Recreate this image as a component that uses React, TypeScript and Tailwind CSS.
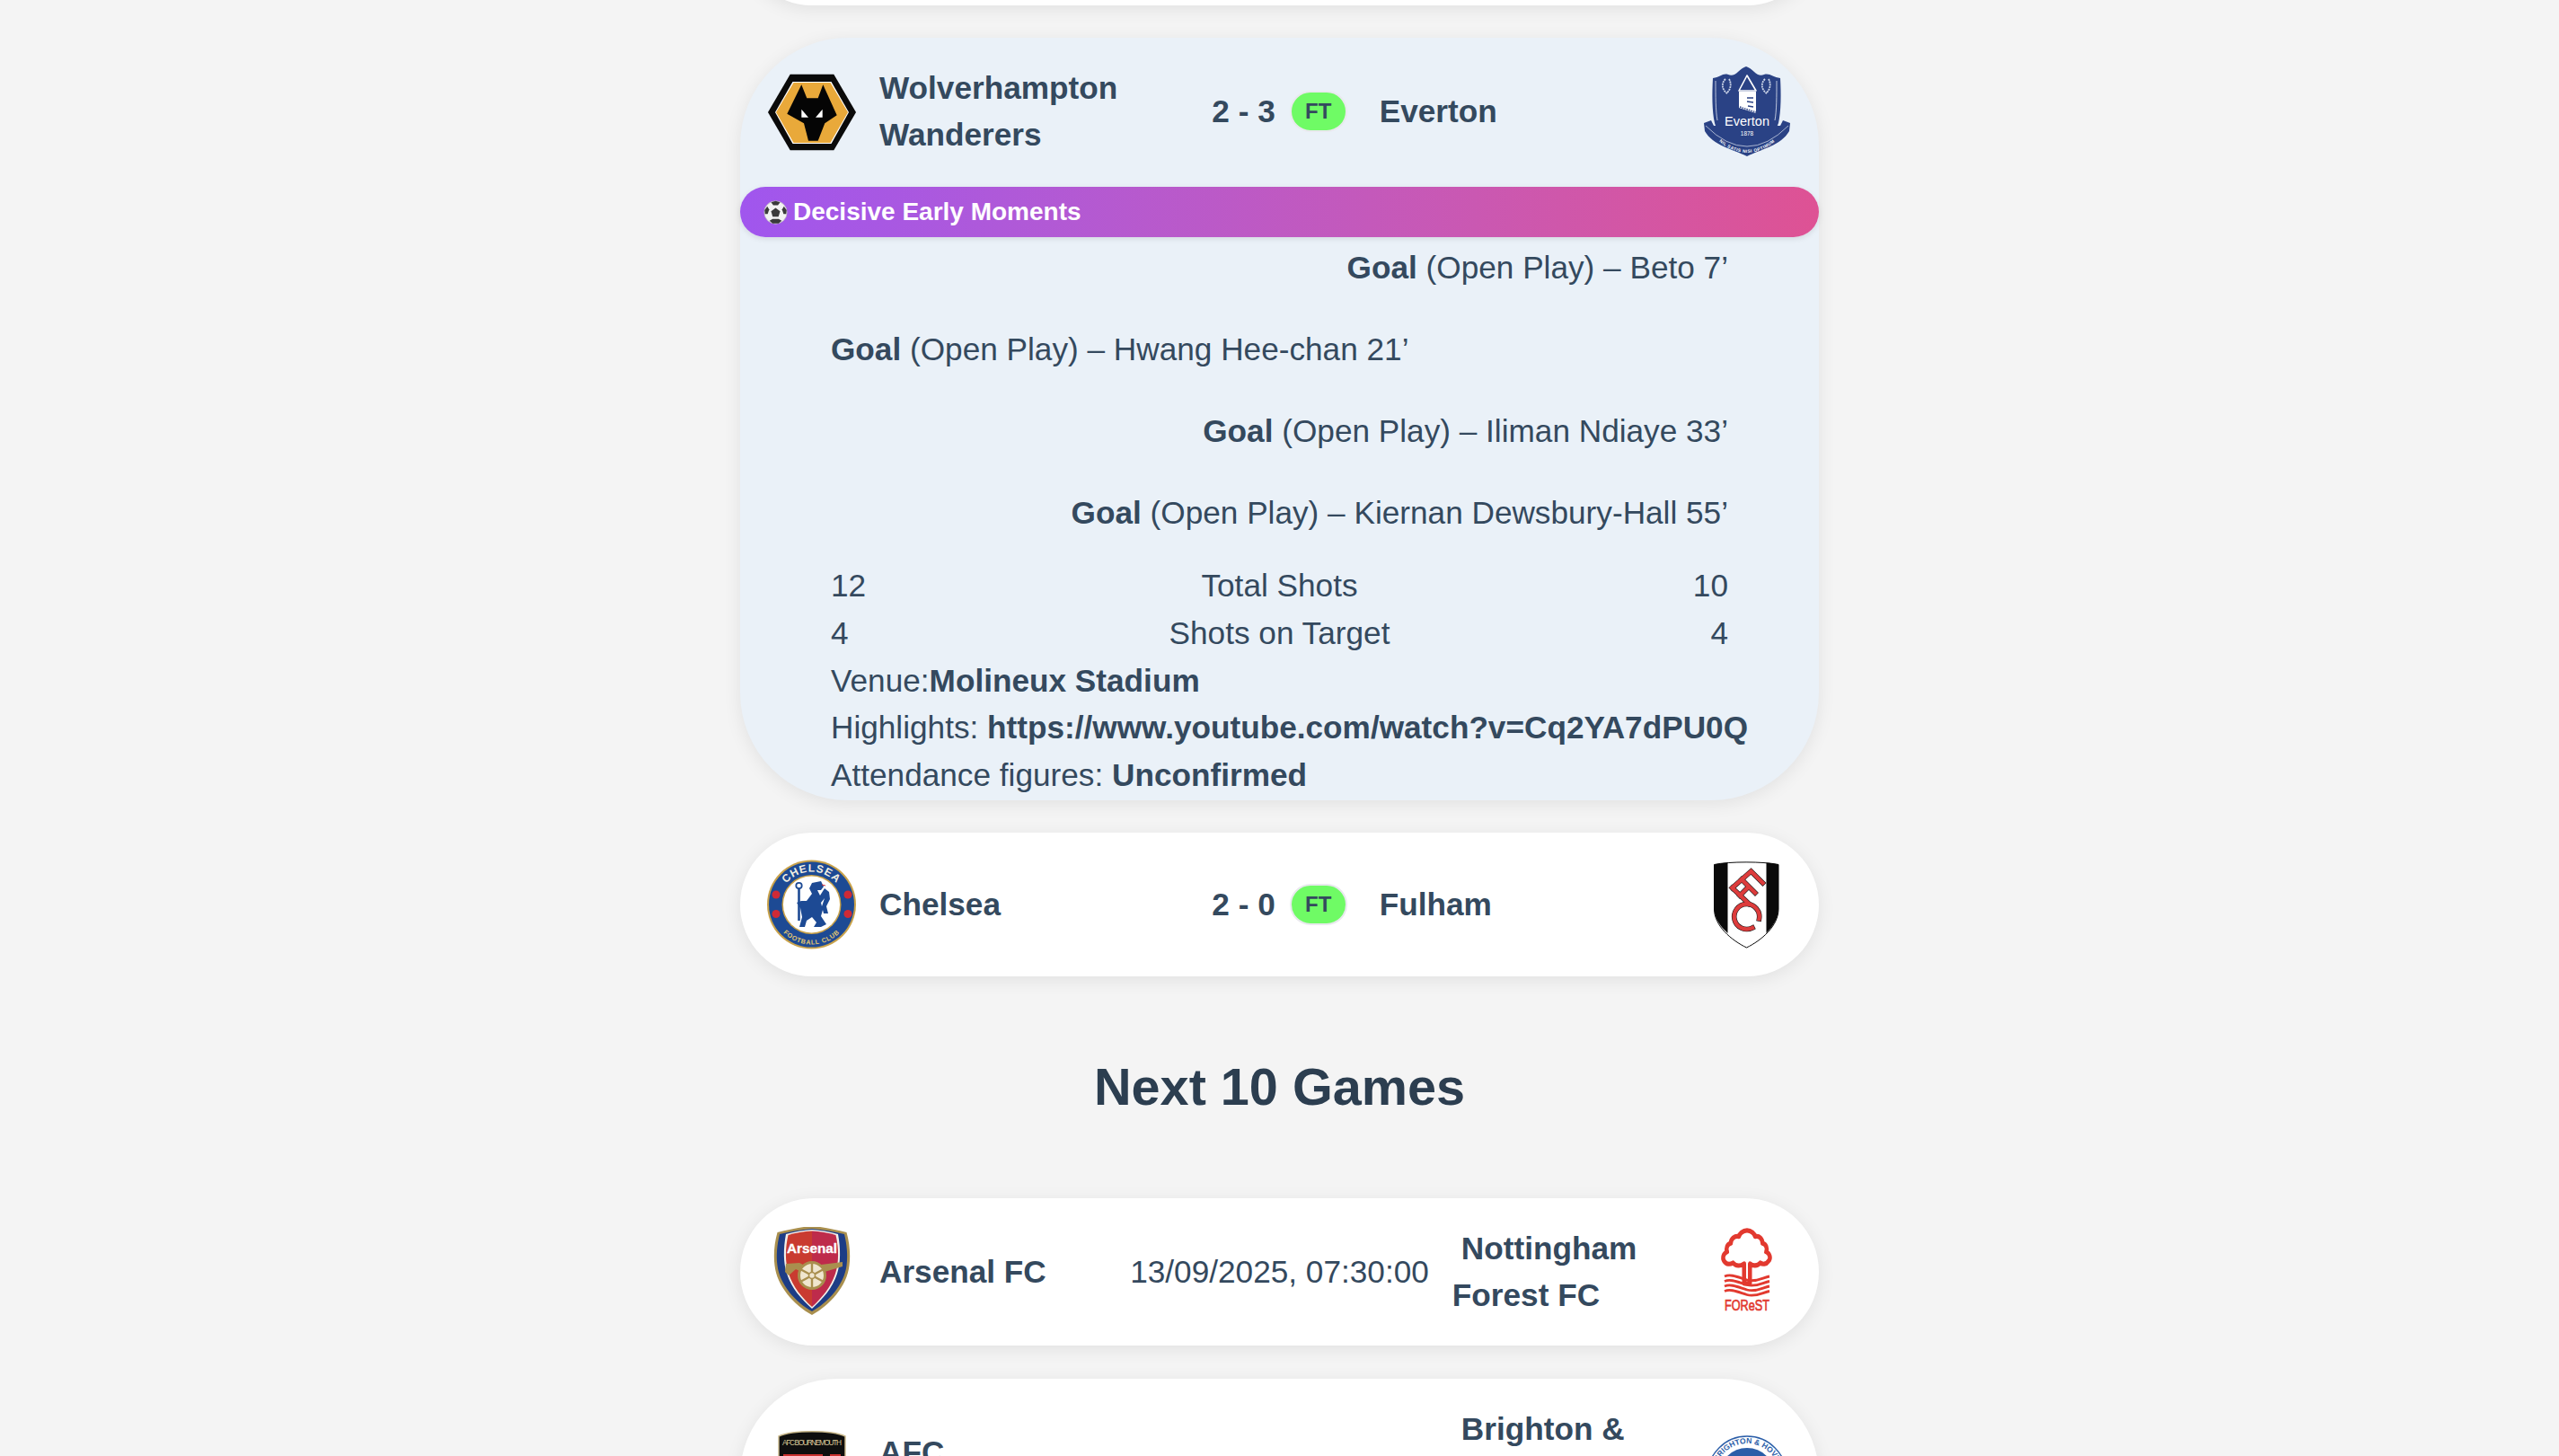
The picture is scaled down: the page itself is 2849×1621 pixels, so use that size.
import type { ReactNode } from 'react'

function Wolves() {
  return (
    <svg viewBox="0 0 100 100" className="w-[100px] h-[100px] shrink-0">
      <polygon points="25.7,8.7 74.3,8.7 99,51 74.3,93.3 25.7,93.3 1,51" fill="#0a0a0a" />
      <polygon points="28.5,17 71.5,17 91,51 71.5,86 28.5,86 9,51" fill="#ffffff" />
      <polygon points="29.5,18 70.5,18 90,51 70.5,85 29.5,85 10,51" fill="#e9a93a" />
      <polygon points="38.3,20.3 44.3,35.3 56.7,35.3 62.3,20.3 77.7,54.3 64.3,63.3 56.7,82.7 46,82.7 41,63.3 22.3,52.7" fill="#050505" />
      <polygon points="38.3,47.7 38.3,56.7 46,56.7" fill="#ffffff" />
      <polygon points="61.7,47.7 61.7,56.7 54,56.7" fill="#ffffff" />
    </svg>
  )
}

function Everton() {
  return (
    <svg viewBox="0 0 100 100" className="w-[100px] h-[100px] shrink-0">
      <path d="M2 63 L10 60 L13 66 L87 66 L90 60 L98 63 L97 72 C88 88 66 92 50 100 C34 92 12 88 3 72 Z" fill="#2a4285" />
      <path d="M12 13 C20 12 23 7 29 9 C33 11 37 9 40 6 C43 3 46 1 49 0 C52 1 55 3 58 6 C61 9 65 11 69 9 C75 7 79 12 87 13 C88 30 88 50 85 63 C80 78 64 86 49 92 C34 86 18 78 14 63 C11 50 11 30 12 13 Z" fill="#2a4285" />
      <path d="M15 16 C15 32 15 50 17 60" fill="none" stroke="#dfe5f1" strokeWidth="0.8" />
      <path d="M83 16 C83 32 83 50 81 60" fill="none" stroke="#dfe5f1" strokeWidth="0.8" />
      <path d="M4 66 Q50 112 96 66" fill="none" stroke="#dfe5f1" strokeWidth="0.7" />
      <path d="M50 10 L41 27 L60 27 Z" fill="#2a4285" stroke="#ffffff" strokeWidth="1.6" strokeLinejoin="round" />
      <path d="M41 28 L60 28 L60 52 L41 46 Z" fill="#ffffff" />
      <path d="M42 45 L60 51" stroke="#2a4285" strokeWidth="1.4" strokeDasharray="1.6 1" />
      <path d="M50 35 L57 35 M50 39 L57 40 M51 44 L57 45" stroke="#2a4285" strokeWidth="1.3" />
      <path d="M26 14 C21 19 22 26 28 30 M30 14 C33 19 32 26 27 30" fill="none" stroke="#cdd6e8" strokeWidth="1.8" strokeDasharray="2 0.8" />
      <path d="M70 14 C65 19 66 26 72 30 M74 14 C77 19 76 26 71 30" fill="none" stroke="#cdd6e8" strokeWidth="1.8" strokeDasharray="2 0.8" />
      <text x="50" y="66" textAnchor="middle" fontSize="14.5" fill="#ffffff" textLength="50" lengthAdjust="spacingAndGlyphs" fontFamily="'Liberation Sans', sans-serif">Everton</text>
      <text x="50" y="77" textAnchor="middle" fontSize="6.5" fill="#ffffff" fontFamily="'Liberation Sans', sans-serif">1878</text>
      <path id="everton-motto" d="M7 72 Q50 120 93 72" fill="none" />
      <text fontSize="4.8" fill="#ffffff" fontWeight="700" letterSpacing="0.5" fontFamily="'Liberation Sans', sans-serif">
        <textPath href="#everton-motto" startOffset="50%" textAnchor="middle">NIL SATIS NISI OPTIMUM</textPath>
      </text>
    </svg>
  )
}

function Chelsea() {
  return (
    <svg viewBox="0 0 100 100" className="w-[100px] h-[100px] shrink-0">
      <circle cx="49.5" cy="50" r="49.5" fill="#c9a24a" />
      <circle cx="49.5" cy="50" r="47.5" fill="#1d4a94" />
      <circle cx="49.5" cy="50" r="33" fill="#c9a24a" />
      <circle cx="49.5" cy="50" r="31.5" fill="#ffffff" />
      <path id="chelsea-top" d="M13 50 A36.5 36.5 0 0 1 86 50" fill="none" />
      <path id="chelsea-bottom" d="M5 50 A44.5 44.5 0 0 0 94 50" fill="none" />
      <text fontSize="12" fontWeight="700" fill="#f3efe2" letterSpacing="1" fontFamily="'Liberation Sans', sans-serif">
        <textPath href="#chelsea-top" startOffset="50%" textAnchor="middle">CHELSEA</textPath>
      </text>
      <text fontSize="7.2" fontWeight="700" fill="#e4c770" letterSpacing="0.7" fontFamily="'Liberation Sans', sans-serif">
        <textPath href="#chelsea-bottom" startOffset="50%" textAnchor="middle">FOOTBALL CLUB</textPath>
      </text>
      <g fill="#cf2a36">
        <circle cx="10" cy="39" r="4.5" />
        <circle cx="10" cy="60.5" r="4.5" />
        <circle cx="90" cy="39" r="4.5" />
        <circle cx="90" cy="60.5" r="4.5" />
      </g>
      <circle cx="35.5" cy="29" r="3.2" fill="none" stroke="#1d4a94" strokeWidth="1.8" />
      <path d="M35.5 32 L35.5 68" stroke="#1d4a94" strokeWidth="2.6" />
      <path d="M50 26 L60 24 L63 30 L60 34 L56 34 L59 40 L64 32 L69 36 L70 44 L66 52 L68 60 L63 60 L61 52 L64 43 L60 48 L62 56 L60 63 L66 72 L60 75 L52 75 L55 70 L50 64 L44 68 L42 75 L36 75 L39 64 L37 54 L33 48 L38 46 L44 46 L50 38 L47 32 Z" fill="#1d4a94" />
      <path d="M61 28 L65 29" stroke="#cf2a36" strokeWidth="1" />
    </svg>
  )
}

function Fulham() {
  return (
    <svg viewBox="0 0 100 100" className="w-[100px] h-[100px] shrink-0">
      <path d="M13.5 5.5 C30 2 68 2 85 5.5 L85 55 C85 74 66 90 49.5 98 C33 90 13.5 74 13.5 55 Z" fill="#ffffff" stroke="#0a0a0a" strokeWidth="1" />
      <path d="M13.5 5.5 C18 4.5 23 4 28.5 3.6 L28.5 82 C20 74 13.5 65 13.5 55 Z" fill="#0a0a0a" />
      <path d="M85 5.5 C80 4.5 76 4 71.5 3.6 L71.5 82 C79 74 85 65 85 55 Z" fill="#0a0a0a" />
      <g fill="none" strokeLinecap="square">
        <g stroke="#1a1a1a" strokeWidth="5.6">
          <path d="M33.5 31.5 L54.5 13 L67.5 26 M44 22 L59 37 M33.5 31.5 L52 49 M42 40 L49 33" />
          <path d="M63.5 66 A14 14 0 1 0 56 76" />
        </g>
        <g stroke="#dd3c3c" strokeWidth="4.4">
          <path d="M33.5 31.5 L54.5 13 L67.5 26 M44 22 L59 37 M33.5 31.5 L52 49 M42 40 L49 33" />
          <path d="M63.5 66 A14 14 0 1 0 56 76" />
        </g>
      </g>
    </svg>
  )
}

function Arsenal() {
  return (
    <svg viewBox="0 0 100 100" className="w-[100px] h-[100px] shrink-0">
      <path d="M11.5 6 C24 3 37 0 50 -1 C63 0 76 3 88.5 6 C92 18 93 32 91.5 43 C89 66 70 87 50 98 C30 87 11 66 8.5 43 C7 32 8 18 11.5 6 Z" fill="#a98f4e" />
      <path d="M14 8 C26 5 38 3 50 2 C62 3 74 5 86 8 C89 20 90 32 88.5 43 C86 64 68 84 50 94 C32 84 14 64 11.5 43 C10 32 11 20 14 8 Z" fill="#1d3d86" />
      <path d="M21 8 C30 5.5 40 3.5 50 3 C60 3.5 70 5.5 79 8 C82 24 82 40 78 52 C73 68 62 80 50 91 C38 80 27 68 22 52 C18 40 18 24 21 8 Z" fill="#f4f1ea" />
      <path d="M23.5 9 C32 6.5 41 5 50 4.5 L50 89 C39 79 29 67 24 52 C20 40 20 24 23.5 9 Z" fill="#c93b30" />
      <path d="M76.5 9 C68 6.5 59 5 50 4.5 L50 89 C61 79 71 67 76 52 C80 40 80 24 76.5 9 Z" fill="#be2b4b" />
      <text x="50" y="28.5" textAnchor="middle" fontSize="14.5" fontWeight="700" fill="#ffffff" stroke="#ffffff" strokeWidth="0.3" textLength="56" lengthAdjust="spacingAndGlyphs" fontFamily="'Liberation Sans', sans-serif">Arsenal</text>
      <path d="M21 41 L36 40 L44 44 L84 39 L84 44 L64 50 L40 51 L32 47 L24 54 L20 50 Z" fill="#a98f4e" />
      <circle cx="50" cy="54" r="14.5" fill="#f0e6cf" stroke="#a98f4e" strokeWidth="3" />
      <path d="M50 40 L50 68 M37 47 L63 61 M37 61 L63 47" stroke="#a98f4e" strokeWidth="2.4" />
      <circle cx="50" cy="54" r="3.5" fill="#f0e6cf" stroke="#a98f4e" strokeWidth="1.6" />
    </svg>
  )
}

function Forest() {
  return (
    <svg viewBox="0 0 100 100" className="w-[100px] h-[100px] shrink-0">
      <g transform="translate(9 2) scale(0.82 0.95)">
        <path d="M50 2 C56 2 60 6 61 9 C67 8 71 12 71 17 C76 18 78 23 76 27 C81 29 83 35 79 38 C76 42 71 42 68 40 C64 44 58 44 54 41 L54 64 L46 64 L46 41 C41 44 35 44 31 40 C27 42 22 42 19 38 C16 34 18 29 23 27 C21 23 23 18 28 17 C28 12 33 8 39 9 C40 6 44 2 50 2 Z" fill="none" stroke="#e2392f" strokeWidth="5.5" strokeLinejoin="round" />
      </g>
      <g fill="none" stroke="#e2392f" strokeWidth="2.8">
        <path d="M25 55 C32 52 40 56 50 59 C60 62 68 56 75 55" />
        <path d="M25 60.5 C32 57.5 40 61.5 50 64.5 C60 67.5 68 61.5 75 60.5" />
        <path d="M25 66 C32 63 40 67 50 70 C60 73 68 67 75 66" />
        <path d="M25 71.5 C32 68.5 40 72.5 50 75.5 C60 78.5 68 72.5 75 71.5" />
      </g>
      <text x="50" y="93" textAnchor="middle" fontSize="17" fill="#e2392f" textLength="50" lengthAdjust="spacingAndGlyphs" stroke="#e2392f" strokeWidth="0.7" fontFamily="'Liberation Sans', sans-serif">FOReST</text>
    </svg>
  )
}

function Bournemouth() {
  return (
    <svg viewBox="0 0 100 100" className="w-[100px] h-[100px] shrink-0">
      <path d="M13 6 C28 -1 72 -1 87 6 L87 75 C87 88 65 95 50 100 C35 95 13 88 13 75 Z" fill="#0e0e0e" stroke="#c8b78a" strokeWidth="1.4" />
      <text x="50" y="16" textAnchor="middle" fontSize="8.4" fill="#d9c998" textLength="66" fontFamily="'Liberation Sans', sans-serif">AFC BOURNEMOUTH</text>
      <path d="M18 26 L82 26 L82 72 C82 84 62 90 50 94 C38 90 18 84 18 72 Z" fill="#c8312f" />
      <path d="M62 26 L70 26 L70 88 L62 90 Z" fill="#0e0e0e" />
      <path d="M46 34 C38 30 33 42 38 50 L46 64 L56 64 L54 40 Z" fill="#ffffff" />
      <circle cx="45" cy="40" r="4" fill="#0e0e0e" />
    </svg>
  )
}

function Brighton() {
  return (
    <svg viewBox="0 0 100 100" className="w-[100px] h-[100px] shrink-0">
      <circle cx="50" cy="50" r="44" fill="#ffffff" stroke="#2b5ea8" strokeWidth="1.4" />
      <circle cx="50" cy="50" r="31" fill="#2b5ea8" />
      <path id="brighton-top" d="M14 50 A36 36 0 0 1 86 50" fill="none" />
      <text fontSize="8.6" fill="#2b5ea8" fontWeight="700" fontFamily="'Liberation Sans', sans-serif">
        <textPath href="#brighton-top" startOffset="50%" textAnchor="middle">BRIGHTON & HOVE</textPath>
      </text>
    </svg>
  )
}

function SoccerBall() {
  return (
    <svg viewBox="0 0 32 32" className="w-[27px] h-[27px] shrink-0">
      <circle cx="16" cy="16" r="15" fill="#f2f2f2" stroke="#b8b8b8" strokeWidth="0.8" />
      <polygon points="16,10 22,14.5 19.8,21.5 12.2,21.5 10,14.5" fill="#3a3a3a" />
      <path d="M10 2.6 L16 1 L22 2.6 L19 6.5 L13 6.5 Z" fill="#3a3a3a" />
      <path d="M1.5 13 L5 8 L7.5 12 L5.5 18 L2 18 Z" fill="#3a3a3a" />
      <path d="M30.5 13 L27 8 L24.5 12 L26.5 18 L30 18 Z" fill="#3a3a3a" />
      <path d="M8 27 L12 24.5 L20 24.5 L24 27 L20 30.5 L12 30.5 Z" fill="#3a3a3a" />
    </svg>
  )
}

type MatchProps = {
  homeLogo: ReactNode
  home: string
  center: ReactNode
  away: ReactNode
  awayLogo: ReactNode
}

function MatchRow({ homeLogo, home, center, away, awayLogo }: MatchProps) {
  return (
    <div className="flex items-center gap-[26px] p-[30px] leading-[52.15px]">
      <div className="flex flex-1 basis-0 items-center gap-[25px]">
        {homeLogo}
        <span className="font-bold">{home}</span>
      </div>
      {center}
      <div className="flex flex-1 basis-0 items-center gap-[25px]">
        <span className="flex-1 font-bold indent-[10px]">{away}</span>
        {awayLogo}
      </div>
    </div>
  )
}

function Score({ value }: { value: string }) {
  return (
    <div className="flex items-center gap-[16px]">
      <span className="font-bold whitespace-nowrap">{value}</span>
      <span className="flex h-[46px] w-[64px] items-center justify-center rounded-[23px] border-2 border-[#e9e9ee] bg-[#6ffb65] text-[24px] leading-none font-bold">
        FT
      </span>
    </div>
  )
}

const cardClass = 'rounded-[120px] bg-white shadow-[0_4px_20px_rgba(0,0,0,0.08)]'

function Goal({ who, side }: { who: string; side: 'left' | 'right' }) {
  return (
    <p className={side === 'right' ? 'text-right mb-[38px]' : 'text-left mb-[38px]'}>
      <strong>Goal</strong> (Open Play) – {who}
    </p>
  )
}

export default function App() {
  return (
    <div className="h-[1621px] overflow-hidden bg-[#f4f4f4] font-['Liberation_Sans',Arial,sans-serif] text-[35.2px] leading-[52.8px] text-[#34495e]">
      <div className="mx-auto flex w-[1201px] flex-col gap-[36.5px]">
        <div className={`${cardClass} -mt-[154.5px] h-[160px]`} />

        <div className="rounded-[120px] bg-[#eaf1f8] shadow-[0_4px_20px_rgba(0,0,0,0.08)]">
          <MatchRow
            homeLogo={<Wolves />}
            home="Wolverhampton Wanderers"
            center={<Score value="2 - 3" />}
            away="Everton"
            awayLogo={<Everton />}
          />
          <div className="mt-[2px] flex h-[56px] items-center gap-[6px] rounded-[28px] bg-gradient-to-r from-[#a056ee] to-[#de5294] pl-[26px] text-[28px] font-bold text-white shadow-[0_2px_6px_rgba(0,0,0,0.1)]">
            <SoccerBall />
            Decisive Early Moments
          </div>
          <div className="h-[626.2px] px-[101px] pt-[8px] whitespace-nowrap">
            <Goal who="Beto 7’" side="right" />
            <Goal who="Hwang Hee-chan 21’" side="left" />
            <Goal who="Iliman Ndiaye 33’" side="right" />
            <Goal who="Kiernan Dewsbury-Hall 55’" side="right" />
            <div className="-mt-[9.5px] flex justify-between">
              <span className="w-[100px]">12</span>
              <span>Total Shots</span>
              <span className="w-[100px] text-right">10</span>
            </div>
            <div className="flex justify-between">
              <span className="w-[100px]">4</span>
              <span>Shots on Target</span>
              <span className="w-[100px] text-right">4</span>
            </div>
            <p>Venue:<strong>Molineux Stadium</strong></p>
            <p>Highlights: <strong>https://www.youtube.com/watch?v=Cq2YA7dPU0Q</strong></p>
            <p>Attendance figures: <strong>Unconfirmed</strong></p>
          </div>
        </div>

        <div className={cardClass}>
          <MatchRow
            homeLogo={<Chelsea />}
            home="Chelsea"
            center={<Score value="2 - 0" />}
            away="Fulham"
            awayLogo={<Fulham />}
          />
        </div>

        <h2 className="mt-[53.5px] mb-[54.5px] text-center text-[57.6px] leading-[66px] font-bold text-[#2c3e50]">Next 10 Games</h2>

        <div className={cardClass}>
          <MatchRow
            homeLogo={<Arsenal />}
            home="Arsenal FC"
            center={<span className="whitespace-nowrap">13/09/2025, 07:30:00</span>}
            away="Nottingham Forest FC"
            awayLogo={<Forest />}
          />
        </div>

        <div className={cardClass}>
          <MatchRow
            homeLogo={<Bournemouth />}
            home="AFC Bournemouth"
            center={<span className="whitespace-nowrap">13/09/2025, 10:00:00</span>}
            away={<>Brighton & Hove Albion<br />FC</>}
            awayLogo={<Brighton />}
          />
        </div>
      </div>
    </div>
  )
}
